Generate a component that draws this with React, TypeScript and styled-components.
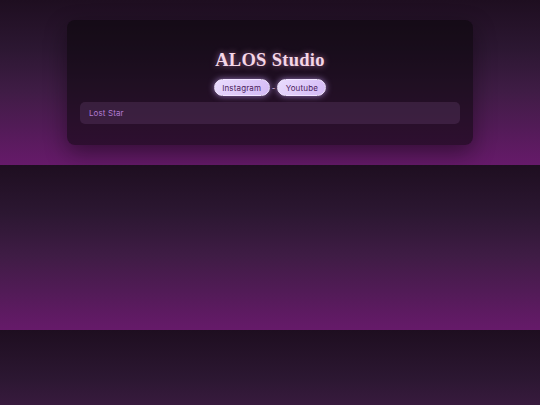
import React from "react";
import styled, { createGlobalStyle } from "styled-components";

const Global = createGlobalStyle`
  html {
    background: linear-gradient(to bottom, #1e0e20 0%, #2c1732 30%, #3f1c45 55%, #661a6a 100%);
    background-size: 100% 165px;
    background-repeat: repeat;
    min-height: 100%;
  }
  body {
    margin: 0;
    padding: 20px 0 20px;
    font-family: Inter, "Noto Sans", sans-serif;
  }
`;

const Card = styled.main`
  box-sizing: border-box;
  width: 406px;
  height: 125px;
  margin: 0 auto;
  padding: 27px 13px 20px;
  border-radius: 8px;
  background: rgba(10, 5, 10, 0.55);
  box-shadow: 0 8px 22px rgba(10, 0, 12, 0.45);
  display: flex;
  flex-direction: column;
  align-items: center;
`;

const Title = styled.h1`
  margin: 0;
  font-family: "Liberation Serif", "DejaVu Serif", serif;
  font-weight: 700;
  font-size: 18.5px;
  line-height: 26px;
  letter-spacing: 0.3px;
  color: #f5d6e7;
  text-shadow: 0 0 6px rgba(240, 160, 215, 0.6);
`;

const Links = styled.nav`
  margin-top: 6px;
  display: flex;
  align-items: center;
  gap: 2px;
`;

const Pill = styled.a<{ $w: number }>`
  display: inline-flex;
  align-items: center;
  justify-content: center;
  height: 17px;
  width: ${(p) => p.$w}px;
  box-sizing: border-box;
  border-radius: 9px;
  background: linear-gradient(135deg, #eadcfd 0%, #d3b9f5 100%);
  border: 1px solid #f0e4ff;
  box-shadow: 0 0 6px rgba(200, 160, 250, 0.7);
  color: #4a1c5c;
  font-family: Inter, "Noto Sans", sans-serif;
  font-size: 8px;
  font-weight: 400;
  letter-spacing: 0.15px;
  text-decoration: none;
`;

const Dash = styled.span`
  color: #e9c9f0;
  font-size: 8px;
  line-height: 1;
`;

const Field = styled.div`
  align-self: stretch;
  margin-top: 6px;
  height: 22px;
  border-radius: 5px;
  background: rgba(120, 80, 130, 0.25);
  display: flex;
  align-items: center;
  padding-left: 9px;
  color: #b27bd3;
  font-size: 8px;
  letter-spacing: 0.1px;
  font-family: Inter, "Noto Sans", sans-serif;
`;

export default function App() {
  return (
    <>
      <Global />
      <Card>
        <Title>ALOS Studio</Title>
        <Links>
          <Pill $w={56}>Instagram</Pill>
          <Dash>-</Dash>
          <Pill $w={49}>Youtube</Pill>
        </Links>
        <Field>Lost Star</Field>
      </Card>
    </>
  );
}
